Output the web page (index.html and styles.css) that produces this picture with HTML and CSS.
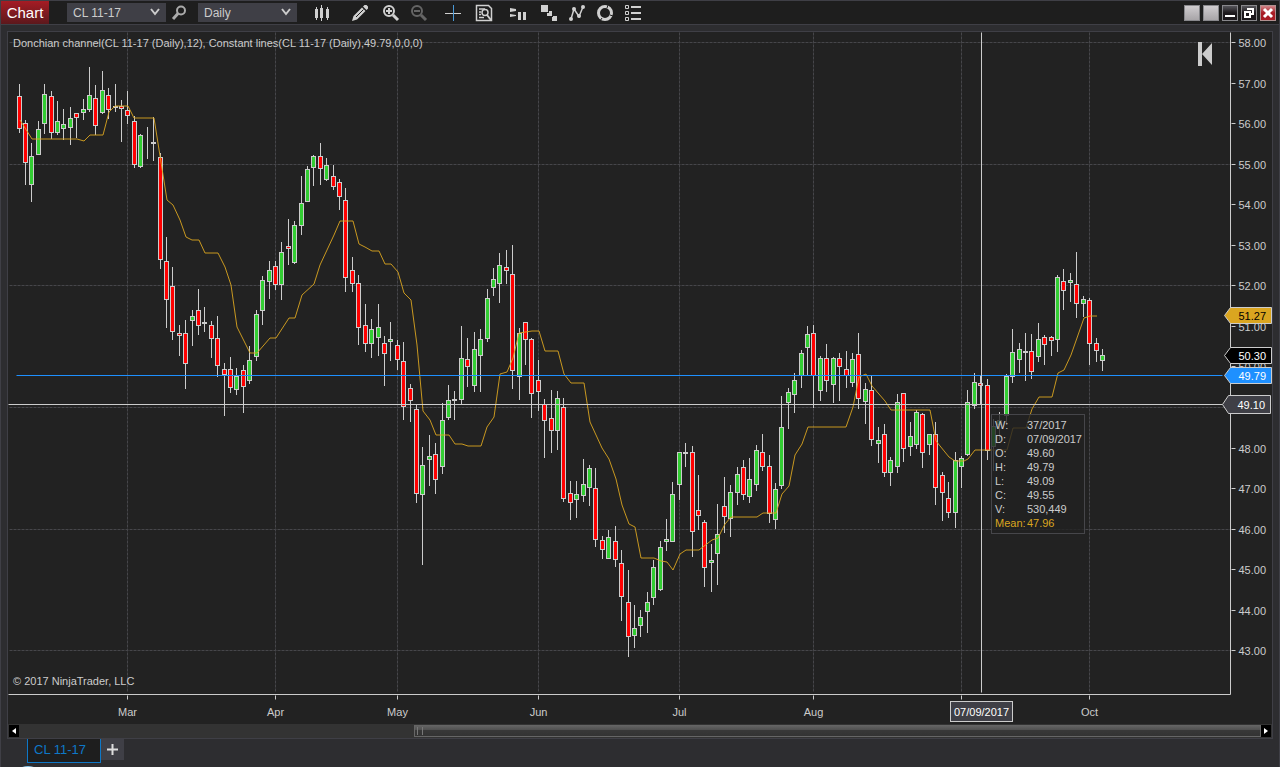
FILE: index.html
```html
<!DOCTYPE html>
<html lang="en">

<head>
    <meta charset="UTF-8">
    <meta name="viewport" content="width=device-width, initial-scale=1.0">
    <title>Chart - CL 11-17</title>
    <link rel="stylesheet" href="styles.css">
</head>

<body>

    <header class="toolbar">
        <button class="chart-menu">Chart</button>

        <div class="picker">
            <select aria-label="Instrument">
                <option>CL 11-17</option>
            </select>
            <svg class="chevron" viewBox="0 0 10 8"><path d="M1 1l4 5 4-5" /></svg>
        </div>
        <button class="icon-btn search" aria-label="Search instrument">
            <svg viewBox="0 0 18 18">
                <circle cx="10" cy="6.500" r="4" stroke-width="2" />
                <path d="M7 9.500L2 15" stroke-width="3" />
            </svg>
        </button>
        <div class="picker">
            <select aria-label="Interval">
                <option>Daily</option>
            </select>
            <svg class="chevron" viewBox="0 0 10 8"><path d="M1 1l4 5 4-5" /></svg>
        </div>

        <nav class="tools">
            <button class="icon-btn" aria-label="Chart style">
                <svg viewBox="0 0 18 18">
                    <path d="M3.500 3v13M8.500 1v16M14.500 3v13" stroke-width="1" />
                    <path class="solid" d="M2 5h3v9H2zM7 4h3v10H7zM13 5h3v9h-3z" />
                </svg>
            </button>
            <button class="icon-btn space-l" aria-label="Drawing tools">
                <svg viewBox="0 0 18 18">
                    <path class="solid" d="M1 17l1.500-5L11 3.500l3.500 3.500L6 15.500zM12 2.500l1.500-1.500h2L17 2.500v2L15.500 6z" />
                    <path class="cut" d="M5 13l7.500-7.500" />
                </svg>
            </button>
            <button class="icon-btn space-s" aria-label="Zoom in">
                <svg viewBox="0 0 18 18">
                    <circle cx="7" cy="7" r="5" stroke-width="2" />
                    <path d="M4 7h6M7 4v6" stroke-width="2" />
                    <path d="M11 11l5 5" stroke-width="3" />
                </svg>
            </button>
            <button class="icon-btn" aria-label="Zoom out" disabled>
                <svg viewBox="0 0 18 18">
                    <circle cx="7" cy="7" r="5" stroke-width="2" />
                    <path d="M4 7h6" stroke-width="2" />
                    <path d="M11 11l5 5" stroke-width="3" />
                </svg>
            </button>
            <button class="icon-btn space-m" aria-label="Crosshair">
                <svg viewBox="0 0 18 18">
                    <path d="M1 9.500h16" stroke-width="1" />
                    <path class="blue" d="M9.500 1v16" stroke-width="1" />
                </svg>
            </button>
            <button class="icon-btn space-s" aria-label="Data box">
                <svg viewBox="0 0 18 18">
                    <path d="M16.500 16.500h-15v-15h12l3 3zM4 5h6M4 8h2M4 10.500h2M4 13.500h5" stroke-width="1.500" />
                    <circle cx="10" cy="8.500" r="3" stroke-width="1.500" />
                    <path d="M12 11l4 5" stroke-width="2" />
                </svg>
            </button>
            <button class="icon-btn space-m" aria-label="Chart trader">
                <svg viewBox="0 0 18 18">
                    <path class="solid" d="M1 4l6 1v2l-6 1zM1 10l6 1v1l-6 1zM9 8h3v8H9zM14 8h3v8h-3z" />
                </svg>
            </button>
            <button class="icon-btn space-s" aria-label="Data series">
                <svg viewBox="0 0 18 18">
                    <path class="solid" d="M1 1h7v7H1zM9 7h3v5H7V9h2zM13 12h4v5h-5v-4h1z" />
                </svg>
            </button>
            <button class="icon-btn" aria-label="Indicators">
                <svg viewBox="0 0 18 18">
                    <path d="M3 15L6 5l5 7.500L15 3" stroke-width="1.500" />
                    <g class="solid">
                        <circle cx="3" cy="15" r="2" />
                        <circle cx="6" cy="5" r="2" />
                        <circle cx="11" cy="12" r="2" />
                        <circle cx="15" cy="3" r="2" />
                    </g>
                </svg>
            </button>
            <button class="icon-btn" aria-label="Strategies">
                <svg viewBox="0 0 18 18">
                    <circle cx="9" cy="9" r="6.500" stroke-width="3" />
                    <path class="cut" d="M12 1l-1 3M17 12l-3-1M6 14l-2 3" />
                </svg>
            </button>
            <button class="icon-btn" aria-label="Properties">
                <svg viewBox="0 0 18 18">
                    <path d="M7 3h10M7 9h10M7 15h10" stroke-width="2" />
                    <path d="M1.500 1.500h3v3h-3zM1.500 7.500h3v3h-3zM1.500 13.500h3v3h-3z" stroke-width="1" />
                </svg>
            </button>
        </nav>

        <div class="window-buttons">
            <button class="plain" aria-label="Link instrument"></button>
            <button class="plain" aria-label="Link interval"></button>
            <button class="dark" aria-label="Minimize">
                <svg viewBox="0 0 14 14"><path d="M2 10h10" stroke-width="2" /></svg>
            </button>
            <button class="dark" aria-label="Restore">
                <svg viewBox="0 0 14 14"><path d="M3 6h5v5H3zM6 4V3h5v5H9" stroke-width="2" /></svg>
            </button>
            <button class="close" aria-label="Close">
                <svg viewBox="0 0 14 14"><path d="M3 3l8 8M11 3l-8 8" stroke-width="3" /></svg>
            </button>
        </div>
    </header>

    <main class="panel">
        <div class="chart-area">
            <svg id="chart" viewBox="8 32 1264 692" role="img" aria-label="CL 11-17 daily price chart"></svg>
            <table class="data-box">
                <tr><th>W:</th><td>37/2017</td></tr>
                <tr><th>D:</th><td>07/09/2017</td></tr>
                <tr><th>O:</th><td>49.60</td></tr>
                <tr><th>H:</th><td>49.79</td></tr>
                <tr><th>L:</th><td>49.09</td></tr>
                <tr><th>C:</th><td>49.55</td></tr>
                <tr><th>V:</th><td>530,449</td></tr>
                <tr class="mean"><th>Mean:</th><td>47.96</td></tr>
            </table>
        </div>
        <div class="scrollbar">
            <button aria-label="Scroll left"><svg viewBox="0 0 10 12"><path d="M7 3v6L3 6z" /></svg></button>
            <div class="track"><div class="thumb"></div></div>
            <button aria-label="Scroll right"><svg viewBox="0 0 10 12"><path d="M3 3v6l4-3z" /></svg></button>
        </div>
    </main>

    <footer class="tabs">
        <a class="tab" href="#chart">CL 11-17</a>
        <button class="add-tab" aria-label="Add tab">
            <svg viewBox="0 0 11 11"><path d="M5.500 0v11M0 5.500h11" /></svg>
        </button>
        <span class="orb"></span>
    </footer>

    <script src="script.js"></script>
</body>

</html>
```
FILE: styles.css
```css
* {
    box-sizing: border-box;
}

body {
    margin: 0;
    min-height: 100vh;
    overflow: hidden;
    background-color: #2d2d30;
    border: 1px solid #3f3f46;
    border-bottom: none;
    font-family: "Liberation Sans", Arial, sans-serif;
    font-size: 12px;
    color: #ccc;
}

button {
    margin: 0;
    padding: 0;
    border: none;
    background: none;
    font-family: inherit;
    color: inherit;
}

/* Toolbar */
.toolbar {
    display: flex;
    align-items: center;
    height: 24px;
    padding-right: 3px;
    background-color: #1e1e1e;
    border-bottom: 1px solid #3f3f46;
}

.chart-menu {
    width: 48px;
    height: 23px;
    margin-right: 18px;
    background: linear-gradient(#a51c24, #5c181c);
    color: #fff;
    font-size: 15px;
}

.picker {
    position: relative;
    width: 99px;
}

.picker select {
    display: block;
    appearance: none;
    width: 100%;
    height: 19px;
    padding: 0 6px;
    border: none;
    border-radius: 0;
    background-color: #3f3f46;
    color: #ccc;
    font-family: inherit;
    font-size: 12px;
}

.chevron {
    position: absolute;
    right: 6px;
    top: 5px;
    width: 10px;
    height: 8px;
    fill: none;
    stroke: #ccc;
    stroke-width: 2;
    pointer-events: none;
}

.icon-btn {
    display: flex;
    align-items: center;
    justify-content: center;
    width: 24px;
    height: 22px;
}

.icon-btn svg {
    width: 18px;
    height: 18px;
    fill: none;
    stroke: #d0d0d0;
}

.icon-btn .solid {
    fill: #d0d0d0;
    stroke: none;
}

.icon-btn .cut {
    stroke: #1e1e1e;
    stroke-width: 1;
}

.icon-btn .blue {
    stroke: #4a9ad8;
}

.icon-btn:disabled {
    opacity: 0.4;
}

.search {
    width: 32px;
    padding-right: 4px;
}

.search svg {
    stroke: #aaa;
}

.tools {
    display: flex;
    gap: 4px;
    margin-left: 13px;
}

.space-s {
    margin-left: 3px;
}

.space-m {
    margin-left: 6px;
}

.space-l {
    margin-left: 10px;
}

.window-buttons {
    display: flex;
    gap: 3px;
    margin-left: auto;
}

.window-buttons button {
    width: 16px;
    height: 16px;
    border: 1px solid #88888c;
}

.window-buttons svg {
    display: block;
    fill: none;
    stroke: #fff;
}

.window-buttons .plain {
    background: linear-gradient(#cfcccf, #a8a5a8);
}

.window-buttons .dark {
    background: linear-gradient(#55555a, #1c181c 50%);
}

.window-buttons .close {
    background: linear-gradient(#d08488, #a81c24 50%);
    border-color: #b09090;
}

/* Chart panel */
.panel {
    margin: 6px 6px 0;
    border: 1px solid #3f3f46;
    background-color: #222;
}

.chart-area {
    position: relative;
}

#chart {
    display: block;
    width: 100%;
}

#chart text {
    font-size: 11px;
    fill: #ccc;
}

#chart .middle {
    text-anchor: middle;
}

.grid {
    stroke: #46464a;
    stroke-dasharray: 3 1;
}

.axis {
    stroke: #ccc;
    fill: none;
}

.candle {
    stroke: #ccc;
}

.up {
    fill: #32cd32;
}

.down {
    fill: #f00;
}

.flat {
    fill: #ccc;
}

.donchian {
    fill: none;
    stroke: #daa520;
    stroke-opacity: 0.9;
}

.constant {
    stroke: #1e90ff;
}

.rewind {
    fill: #ccc;
}

#chart .tag-mean text {
    fill: #000;
}

#chart .tag-last text,
#chart .tag-line text,
#chart .tag-cross text {
    fill: #fff;
}

.tag {
    stroke: #ccc;
}

.tag-mean {
    fill: #daa520;
}

.tag-last {
    fill: #000;
}

.tag-line {
    fill: #1e90ff;
}

.tag-cross {
    fill: #3f3f46;
}

.tag text {
    stroke: none;
}

/* Data box beside the crosshair */
.data-box {
    position: absolute;
    left: 77.770%;
    top: 55.200%;
    width: 94px;
    padding: 3px 2px 3px 3px;
    border: 1px solid #46464a;
    border-spacing: 0;
    background-color: rgba(34, 34, 34, 0.8);
    font-size: 11px;
    line-height: 14px;
}

.data-box th,
.data-box td {
    padding: 0;
    text-align: left;
    font-weight: normal;
    white-space: nowrap;
}

.data-box th {
    width: 33px;
}

.data-box .mean {
    color: #daa520;
}

/* Scrollbar */
.scrollbar {
    display: flex;
    height: 14px;
    padding: 1px;
    background-color: #333;
}

.scrollbar button {
    width: 10px;
    height: 12px;
    background-color: #000;
}

.scrollbar svg {
    display: block;
    fill: #fff;
}

.track {
    display: flex;
    justify-content: flex-end;
    flex: 1;
}

.thumb {
    width: 68.200%;
    border: 1px solid #666;
    border-top: none;
    background: linear-gradient(#666, #505050 45%, #383838 50%, #333);
}

.thumb::before {
    content: "";
    display: block;
    width: 4px;
    height: 8px;
    margin: 2px;
    border: 1px solid #777;
    border-width: 0 1px;
}

/* Tabs */
.tabs {
    position: relative;
    display: flex;
    height: 28px;
    padding-left: 26px;
}

.tab {
    width: 74px;
    height: 24px;
    padding-left: 6px;
    border: 1px solid #0e78c8;
    border-top: none;
    background-color: #1e1e1e;
    color: #0e78c8;
    font-size: 13px;
    line-height: 21px;
    text-decoration: none;
}

.add-tab {
    display: flex;
    align-items: center;
    justify-content: center;
    width: 23px;
    height: 21px;
    background-color: #3f3f46;
}

.add-tab svg {
    width: 11px;
    height: 11px;
    stroke: #ddd;
    stroke-width: 2;
}

.orb {
    position: absolute;
    left: 10px;
    top: 27px;
    width: 34px;
    height: 34px;
    border-radius: 50%;
    background-color: #8cc4e4;
}
```
FILE: script.js
```js
// One row per day: high, body top, body bottom, low (chart y), direction
const candles = [
    [84, 96, 129, 133, 'd'], [120, 123, 163, 185, 'd'], [143, 156, 185, 202, 'u'], [121, 129, 155, 155, 'u'],
    [84, 94, 124, 134, 'u'], [91, 96, 133, 139, 'd'], [101, 121, 133, 135, 'u'], [109, 124, 129, 140, 'u'],
    [107, 118, 128, 145, 'u'], [113, 113, 118, 138, 'd'], [99, 109, 113, 120, 'u'], [67, 95, 110, 112, 'u'],
    [85, 98, 126, 135, 'd'], [71, 90, 113, 114, 'u'], [88, 95, 110, 119, 'd'], [84, 106, 108, 112, 'f'],
    [100, 106, 109, 142, 'd'], [91, 110, 116, 124, 'd'], [116, 121, 165, 168, 'd'], [134, 135, 167, 168, 'u'],
    [127, 141, 142, 159, 'f'], [117, 142, 144, 161, 'f'], [153, 157, 260, 269, 'd'], [237, 261, 300, 328, 'd'],
    [267, 286, 332, 340, 'd'], [325, 333, 336, 356, 'd'], [320, 333, 364, 389, 'd'], [310, 316, 321, 346, 'u'],
    [289, 310, 326, 335, 'd'], [307, 322, 324, 332, 'f'], [321, 325, 339, 358, 'd'], [316, 338, 366, 377, 'd'],
    [363, 369, 375, 416, 'd'], [357, 369, 388, 393, 'd'], [368, 376, 390, 395, 'u'], [365, 370, 387, 413, 'd'],
    [346, 360, 381, 384, 'u'], [310, 314, 357, 361, 'u'], [276, 280, 311, 325, 'u'], [261, 270, 282, 299, 'u'],
    [261, 266, 285, 290, 'd'], [242, 252, 285, 300, 'u'], [219, 246, 249, 265, 'd'], [221, 225, 263, 264, 'u'],
    [176, 203, 226, 235, 'u'], [166, 169, 202, 202, 'u'], [155, 156, 168, 186, 'u'], [143, 156, 169, 185, 'd'],
    [158, 165, 180, 181, 'u'], [165, 176, 187, 190, 'd'], [179, 182, 197, 210, 'd'], [188, 200, 278, 292, 'd'],
    [257, 270, 284, 292, 'd'], [275, 283, 328, 345, 'd'], [304, 325, 344, 352, 'd'], [319, 329, 344, 358, 'u'],
    [304, 327, 338, 356, 'u'], [336, 343, 354, 386, 'd'], [322, 339, 342, 361, 'u'], [340, 345, 360, 370, 'd'],
    [342, 361, 407, 420, 'd'], [384, 388, 401, 422, 'd'], [405, 409, 494, 503, 'd'], [447, 465, 495, 565, 'u'],
    [435, 456, 460, 486, 'u'], [443, 454, 480, 494, 'd'], [403, 420, 467, 474, 'u'], [385, 400, 418, 420, 'u'],
    [391, 399, 401, 420, 'f'], [326, 358, 400, 404, 'u'], [338, 359, 367, 387, 'd'], [332, 349, 386, 392, 'u'],
    [329, 339, 356, 392, 'u'], [289, 298, 339, 342, 'u'], [268, 279, 288, 296, 'u'], [253, 265, 284, 303, 'u'],
    [250, 267, 271, 284, 'd'], [245, 274, 371, 389, 'd'], [328, 333, 377, 400, 'u'], [322, 322, 340, 365, 'd'],
    [338, 339, 394, 418, 'd'], [360, 380, 392, 411, 'd'], [399, 404, 421, 458, 'd'], [390, 418, 431, 453, 'd'],
    [391, 398, 431, 450, 'u'], [398, 407, 499, 502, 'd'], [481, 493, 503, 520, 'd'], [481, 494, 500, 518, 'u'],
    [459, 484, 496, 502, 'u'], [465, 468, 488, 506, 'u'], [468, 488, 540, 547, 'd'], [536, 540, 550, 559, 'd'],
    [530, 537, 559, 559, 'u'], [526, 541, 560, 567, 'd'], [550, 563, 597, 621, 'd'], [570, 602, 637, 657, 'd'],
    [605, 628, 636, 648, 'u'], [610, 617, 626, 637, 'u'], [592, 602, 612, 633, 'u'], [560, 567, 598, 605, 'u'],
    [541, 547, 590, 591, 'u'], [519, 539, 542, 551, 'u'], [482, 494, 542, 542, 'u'], [452, 452, 485, 500, 'u'],
    [443, 452, 454, 467, 'f'], [446, 452, 532, 557, 'd'], [475, 510, 516, 530, 'd'], [520, 522, 568, 587, 'd'],
    [544, 560, 563, 592, 'u'], [504, 534, 554, 585, 'u'], [477, 506, 517, 533, 'd'], [485, 492, 519, 537, 'u'],
    [467, 474, 493, 505, 'u'], [460, 467, 495, 500, 'd'], [458, 479, 497, 503, 'u'], [445, 450, 485, 491, 'u'],
    [434, 452, 467, 471, 'd'], [455, 466, 514, 523, 'd'], [483, 489, 520, 529, 'u'], [396, 427, 486, 489, 'u'],
    [388, 392, 403, 429, 'u'], [373, 380, 395, 413, 'u'], [350, 353, 376, 388, 'u'], [326, 334, 348, 376, 'u'],
    [325, 333, 376, 408, 'd'], [356, 358, 391, 401, 'u'], [344, 358, 381, 392, 'd'], [357, 358, 385, 403, 'u'],
    [353, 358, 367, 401, 'd'], [351, 369, 376, 388, 'd'], [353, 359, 383, 387, 'u'], [333, 354, 399, 409, 'd'],
    [383, 389, 402, 424, 'u'], [376, 390, 440, 446, 'd'], [427, 440, 444, 463, 'u'], [424, 434, 473, 477, 'd'],
    [457, 460, 473, 486, 'u'], [394, 402, 467, 473, 'u'], [393, 393, 449, 462, 'd'], [422, 436, 447, 456, 'u'],
    [410, 412, 445, 449, 'u'], [413, 414, 453, 468, 'd'], [434, 434, 445, 455, 'u'], [422, 434, 488, 505, 'd'],
    [472, 475, 493, 521, 'd'], [482, 498, 513, 518, 'd'], [452, 460, 513, 528, 'u'], [456, 458, 467, 488, 'u'],
    [390, 402, 455, 456, 'u'], [373, 382, 406, 409, 'u'], [376, 383, 386, 404, 'd'], [379, 385, 451, 460, 'd'],
    [419, 426, 447, 471, 'u'], [412, 420, 425, 440, 'u'], [374, 376, 416, 425, 'u'], [329, 352, 377, 383, 'u'],
    [343, 349, 360, 373, 'u'], [333, 351, 353, 381, 'f'], [334, 351, 372, 379, 'd'], [323, 339, 357, 362, 'u'],
    [335, 337, 345, 365, 'd'], [336, 337, 341, 356, 'd'], [275, 277, 340, 352, 'u'], [269, 281, 291, 310, 'd'],
    [273, 280, 283, 302, 'u'], [252, 284, 304, 318, 'd'], [296, 299, 304, 317, 'u'], [298, 300, 344, 365, 'd'],
    [338, 343, 351, 362, 'd'], [349, 355, 361, 371, 'u']
];

const donchian = '20,120 32,139 77,139 84,141 90,135 103,135 109,112 115,106 128,106 134,118 154,118 167,200 ' +
    '173,205 180,220 186,237 192,240 199,240 205,253 218,253 225,267 231,285 237,327 250,353 257,353 270,338 ' +
    '276,338 289,318 295,318 302,295 314,284 320,265 327,250 334,235 340,221 353,221 359,244 365,247 372,251 ' +
    '379,251 385,264 391,264 398,272 404,293 411,300 417,345 423,411 430,420 436,435 449,435 455,444 462,444 ' +
    '468,446 481,446 487,427 494,417 500,374 507,372 513,358 519,333 532,331 539,331 545,351 558,351 564,374 ' +
    '571,383 584,383 590,422 602,448 609,459 616,479 622,505 629,524 635,527 641,558 654,558 661,561 667,562 ' +
    '673,570 680,554 686,550 699,550 712,540 718,538 725,524 731,517 757,517 763,513 776,513 782,494 789,486 ' +
    '795,455 802,444 808,427 846,427 853,407 859,377 866,374 872,386 885,401 891,410 930,410 936,441 949,457 ' +
    '955,461 964,461 968,459 975,450 1007,450 1013,428 1026,428 1032,409 1039,397 1052,397 1058,373 1064,370 ' +
    '1071,355 1084,318 1090,316 1097,316';

const months = [[127, 'Mar'], [275, 'Apr'], [397, 'May'], [538, 'Jun'], [679, 'Jul'], [813, 'Aug'], [961, ''], [1089, 'Oct']];

// Tag pointing at the price axis
function tag(name, y, half, label, tip, right) {
    return `<g class="tag tag-${name}">
        <path d="M${tip} ${y}L${tip + 6} ${y - half}H${right}V${y + half}H${tip + 6}z" />
        <text x="${right - 33}" y="${y + 4}">${label}</text>
    </g>`;
}

let grid = '';
let axis = '<path class="axis" d="M1230 32V694M8 694H1230" />';

for (let price = 58; price >= 43; price--) {
    const y = Math.round(42 + (58 - price) * 40.55);
    if ((58 - price) % 3 === 0) {
        grid += `<path class="grid" d="M9 ${y}H1230" />`;
    }
    axis += `<path class="axis" d="M1231 ${y}h4" />`;
    // 49.00 sits under the crosshair tag
    if (price !== 49) {
        axis += `<text x="1238" y="${y + 4}">${price}.00</text>`;
    }
}

months.forEach(([x, name]) => {
    grid += `<path class="grid" d="M${x} 32V691" />`;
    axis += `<path class="axis" d="M${x} 695v4" /><text class="middle" x="${x}" y="715">${name}</text>`;
});

const bars = candles.map(([high, top, bottom, low, dir], i) => {
    const x = Math.floor(19 + i * 6.411);
    const cls = { u: 'up', d: 'down', f: 'flat' }[dir];
    return `<g class="candle ${cls}">
        <path d="M${x} ${high - 0.5}V${low - 0.5}" />
        <rect x="${x - 2}" y="${top}" width="4" height="${Math.max(bottom - top - 1, 0)}" />
    </g>`;
}).join('');

document.getElementById('chart').innerHTML = `
    <g transform="translate(0.5 0.5)">${grid}${bars}</g>
    <polyline class="donchian" points="${donchian}" />
    <g transform="translate(0.5 0.5)">
        <path class="constant" d="M16 375H1222" />
        <path class="axis" d="M8 404H1222M981 32V692" />
        ${axis}
        ${tag('mean', 315, 8, '51.27', 1224, 1271)}
        ${tag('last', 355, 8, '50.30', 1224, 1271)}
        ${tag('line', 375, 8, '49.79', 1224, 1271)}
        ${tag('cross', 404, 9, '49.10', 1222, 1270)}
        <g class="tag tag-cross">
            <rect x="950" y="701" width="62" height="20" />
            <text class="middle" x="981" y="715">07/09/2017</text>
        </g>
    </g>
    <path class="rewind" d="M1198 42h4v24h-4zM1202 54l10-11v22z" />
    <text x="13" y="47">Donchian channel(CL 11-17 (Daily),12), Constant lines(CL 11-17 (Daily),49.79,0,0,0)</text>
    <text x="13" y="685">© 2017 NinjaTrader, LLC</text>
`;
```
